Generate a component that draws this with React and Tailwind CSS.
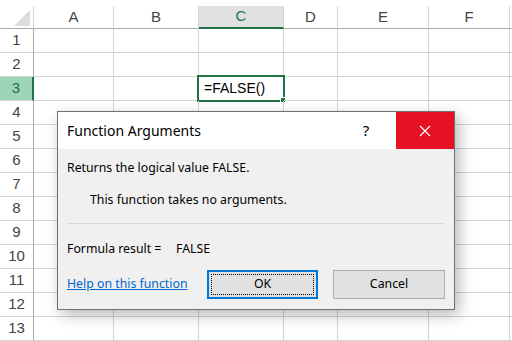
import React from 'react';

const cols = ['A', 'B', 'C', 'D', 'E', 'F'];
const rows = [1, 2, 3, 4, 5, 6, 7, 8, 9, 10, 11, 12, 13];

const App = () => {
  return (
    <div className="relative w-[512px] h-[341px] overflow-hidden bg-white" style={{ fontFamily: '"Segoe UI", "Noto Sans", sans-serif' }}>
      {/* Sheet */}
      <div className="pt-[6px]" style={{ fontFamily: '"Liberation Sans", Arial, sans-serif' }}>
        <div className="grid grid-cols-[34px_80px_85px_85px_54px_91px_81px_2px] text-[15px] text-[#444]">
          {/* header row */}
          <div className="h-[23px] border-r border-b border-r-[#d4d4d4] border-b-[#ababab] relative">
            <div className="absolute right-[3px] bottom-[2px] w-0 h-0 border-l-[16px] border-l-transparent border-b-[16px] border-b-[#dcdcdc]" />
          </div>
          {cols.map((c) => (
            <div
              key={c}
              className={
                c === 'C'
                  ? 'h-[23px] bg-[#e1e1e1] border-r border-r-[#d4d4d4] border-b-2 border-b-[#217346] text-[#217346] flex items-center justify-center'
                  : 'h-[23px] border-r border-b border-r-[#d4d4d4] border-b-[#ababab] flex items-center justify-center'
              }
            >
              {c}
            </div>
          ))}
          <div className="h-[23px] border-b border-b-[#ababab]" />

          {rows.map((r) => (
            <React.Fragment key={r}>
              <div
                className={
                  r === 3
                    ? 'h-[24px] bg-[#9fd5b7] text-[#217346] border-r-2 border-r-[#217346] border-b border-b-[#d4d4d4] flex items-center justify-center'
                    : 'h-[24px] border-r border-b border-r-[#ababab] border-b-[#d4d4d4] flex items-center justify-center'
                }
              >
                {r}
              </div>
              {cols.map((c) => (
                <div key={c} className="relative h-[24px] border-r border-b border-[#d4d4d4]">
                  {r === 3 && c === 'C' && (
                    <>
                      <div className="absolute -left-[2px] -top-[2px] w-[88px] h-[27px] border-2 border-[#217346]" />
                      <div className="absolute -right-[3px] -bottom-[3px] w-[6px] h-[6px] bg-[#217346] border border-white" />
                      <div className="absolute left-[5px] top-0 h-full flex items-center text-[14px] text-black">=FALSE()</div>
                    </>
                  )}
                </div>
              ))}
              <div className="h-[24px] border-b border-[#d4d4d4]" />
            </React.Fragment>
          ))}
        </div>
      </div>

      {/* Dialog */}
      <div className="absolute left-[57px] top-[111px] w-[398px] h-[199px] border border-[#707070] bg-[#f0f0f0] shadow-[4px_5px_14px_rgba(0,0,0,0.28)] flex flex-col text-[12.3px] text-black">
        <div className="h-[37px] bg-white flex items-center shrink-0">
          <span className="pl-[9px] text-[14px] flex-1">Function Arguments</span>
          <span className="w-[30px] text-[15px] text-center mr-[15px]">?</span>
          <div className="w-[58px] h-full bg-[#e81123] flex items-center justify-center">
            <svg width="12" height="12" viewBox="0 0 12 12">
              <path d="M1 1 L11 11 M11 1 L1 11" stroke="white" strokeWidth="1.2" />
            </svg>
          </div>
        </div>
        <div className="flex-1 px-[9px] pt-[10px]">
          <div className="h-[17px] leading-[17px]">Returns the logical value FALSE.</div>
          <div className="h-[17px] leading-[17px] mt-[15px] pl-[23px]">This function takes no arguments.</div>
          <div className="h-px bg-[#d9d9d9] mt-[15px] mr-[1px]" />
          <div className="h-[17px] leading-[17px] mt-[16px] flex">
            <span className="w-[109px]">Formula result =</span>
            <span>FALSE</span>
          </div>
          <div className="flex items-center mt-[13px]">
            <span className="w-[140px] text-[#0066cc] underline">Help on this function</span>
            <div className="w-[111px] h-[29px] border-2 border-[#0078d7] bg-[#e1e1e1] p-[2px]">
              <div className="h-full border border-dotted border-black flex items-center justify-center">OK</div>
            </div>
            <div className="ml-[15px] w-[112px] h-[29px] border border-[#adadad] bg-[#e1e1e1] flex items-center justify-center">Cancel</div>
          </div>
        </div>
      </div>
    </div>
  );
};

export default App;
